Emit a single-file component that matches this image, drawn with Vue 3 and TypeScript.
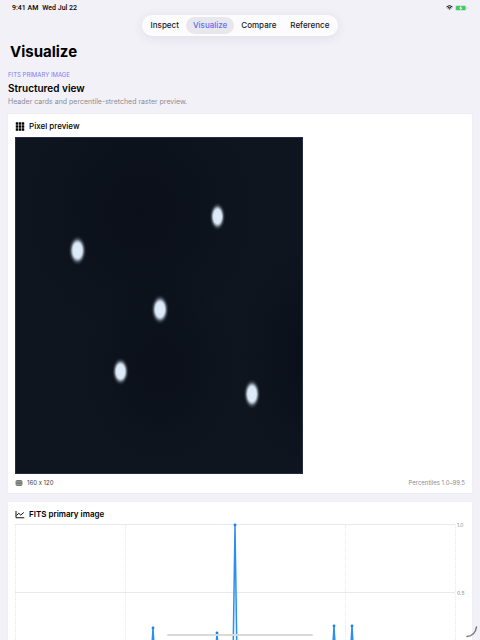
<script setup lang="ts">
import { ref } from 'vue'

interface Point { x: number; y: number }

const tabs: string[] = ['Inspect', 'Visualize', 'Compare', 'Reference']
const active = ref('Visualize')

const stars = [
  { x: 202.5, y: 79.5, rx: 6, ry: 10 },
  { x: 62.5, y: 113.5, rx: 7, ry: 11 },
  { x: 145, y: 172.5, rx: 7, ry: 11 },
  { x: 105.5, y: 234.5, rx: 6.5, ry: 10 },
  { x: 237, y: 257, rx: 6.5, ry: 11 },
]

// Chart space: y = 5 is value 1.0 and y = 141 is value 0.
const baseline = 141
const peaks: Point[] = [
  { x: 138, y: 108 },
  { x: 202, y: 113 },
  { x: 220, y: 5 },
  { x: 319, y: 106 },
  { x: 337, y: 106 },
]
const line = `M0 ${baseline}` + peaks
  .map(p => `L${p.x - 2} ${baseline}L${p.x} ${p.y}L${p.x + 2} ${baseline}`)
  .join('') + `L440 ${baseline}`
const columns: number[] = [0, 110, 330, 440]
</script>

<template>
  <div class="screen">
    <header class="status">
      <span class="clock"><span>9:41 AM</span><span>Wed Jul 22</span></span>
      <span class="indicators">
        <svg class="wifi" viewBox="0 0 14 10" aria-hidden="true">
          <path d="M1 3.8Q7-1.6 13 3.8M3.2 6.1Q7 2.8 10.8 6.1" />
          <path class="dot" d="M4.7 7.3Q7 5.6 9.3 7.3L7 9.7Z" />
        </svg>
        <svg class="battery" viewBox="0 0 26 12" aria-hidden="true">
          <rect class="case" x=".5" y=".5" width="22" height="11" rx="3" />
          <rect class="charge" x="2" y="2" width="19" height="8" rx="2" />
          <path class="charge" d="M24 4Q26 6 24 8Z" />
          <path class="bolt" d="M13 1L8 6.6H11L10 11L15 5.4H12Z" />
        </svg>
      </span>
    </header>

    <nav class="tabs" aria-label="Sections">
      <button
        v-for="tab in tabs"
        :key="tab"
        type="button"
        class="tab"
        :class="{ selected: tab === active }"
        @click="active = tab"
      >{{ tab }}</button>
    </nav>

    <main class="content">
      <h1>Visualize</h1>
      <p class="eyebrow">FITS PRIMARY IMAGE</p>
      <h2>Structured view</h2>
      <p class="summary">Header cards and percentile-stretched raster preview.</p>

      <section class="card">
        <h3>
          <svg class="icon" viewBox="0 0 18 18" aria-hidden="true">
            <template v-for="r in 3" :key="r">
              <rect v-for="c in 3" :key="c" :x="c * 6 - 5.5" :y="r * 6 - 5.5" width="5" height="5" rx="1" />
            </template>
          </svg>
          Pixel preview
        </h3>
        <svg class="raster" viewBox="0 0 288 337" role="img" aria-label="Star field">
          <defs>
            <radialGradient id="star">
              <stop offset="0" stop-color="#e0edfb" />
              <stop offset=".5" stop-color="#dae8f6" />
              <stop offset=".64" stop-color="#a9b6c3" stop-opacity=".85" />
              <stop offset=".8" stop-color="#6c7783" stop-opacity=".4" />
              <stop offset="1" stop-color="#35404b" stop-opacity="0" />
            </radialGradient>
            <radialGradient id="dark">
              <stop offset="0" stop-color="#0a0f19" />
              <stop offset="1" stop-color="#0a0f19" stop-opacity="0" />
            </radialGradient>
          </defs>
          <rect width="288" height="337" fill="#0f151e" />
          <ellipse cx="125" cy="75" rx="120" ry="130" fill="url(#dark)" />
          <ellipse cx="145" cy="230" rx="80" ry="100" fill="url(#dark)" />
          <ellipse cx="288" cy="220" rx="65" ry="110" fill="url(#dark)" />
          <ellipse
            v-for="s in stars"
            :key="s.x"
            :cx="s.x"
            :cy="s.y"
            :rx="s.rx + 2"
            :ry="s.ry + 4"
            fill="url(#star)"
          />
          <rect x=".5" y=".5" width="287" height="336" fill="none" stroke="#262d49" />
        </svg>
        <div class="meta">
          <span class="size">
            <svg class="table-icon" viewBox="0 0 14 12" aria-hidden="true">
              <rect x="1" y="1" width="12" height="10" rx="2" />
              <path d="M1 4.3H13M1 7.6H13M5 1V11M9 1V11" />
            </svg>
            160 x 120
          </span>
          <span class="range">Percentiles 1.0–99.5</span>
        </div>
      </section>

      <section class="card">
        <h3>
          <svg class="icon line-icon" viewBox="0 0 18 18" aria-hidden="true">
            <path d="M1 2V15.5H17.5M2 11L6.5 6.5L10.5 10L16.5 5" />
          </svg>
          FITS primary image
        </h3>
        <svg class="chart" viewBox="0 0 450 150" role="img" aria-label="FITS primary image profile">
          <path class="grid" d="M0 4.5H440M0 72.5H440M0 141H440" />
          <path v-for="x in columns" :key="x" class="grid dotted" :d="`M${x + 0.5} 5V141`" />
          <path class="series" :d="line" />
          <circle v-for="p in peaks" :key="p.x" class="mark" :cx="p.x" :cy="p.y" r="1.4" />
          <text x="442" y="7">1.0</text>
          <text x="442" y="75">0.5</text>
        </svg>
      </section>
    </main>

    <div class="home-bar"></div>
    <svg class="corner" viewBox="0 0 12 12" aria-hidden="true">
      <path d="M1 10.5Q9 10 10.5 1" />
    </svg>
  </div>
</template>

<style>
body {
  margin: 0;
  background: #f2f1f8;
}
</style>

<style scoped>
.screen {
  position: relative;
  height: 100vh;
  overflow: hidden;
  background: #f2f1f8;
  color: #000;
  font-family: Inter, "Liberation Sans", sans-serif;
  font-feature-settings: "calt" 0;
}

.status {
  display: flex;
  justify-content: space-between;
  align-items: center;
  height: 15px;
  padding: 0 12px;
  font-family: Roboto, "Liberation Sans", sans-serif;
  font-size: 7px;
  font-weight: 500;
}

.clock {
  display: flex;
  gap: 4px;
}

.indicators {
  display: flex;
  align-items: center;
  gap: 2px;
}

.wifi {
  width: 7px;
  height: 5px;
  fill: none;
  stroke: #111;
  stroke-width: 2;
}

.wifi .dot {
  fill: #111;
  stroke: none;
}

.battery {
  width: 13px;
  height: 6px;
}

.case {
  fill: #b5e4c2;
}

.charge {
  fill: #42c964;
}

.bolt {
  fill: #fff;
}

.tabs {
  display: flex;
  width: max-content;
  margin: 0 auto;
  padding: 2px;
  border-radius: 11px;
  background: #fcfcfe;
  box-shadow: 0 2px 12px rgba(40, 40, 70, 0.09);
}

.tab {
  height: 17px;
  padding: 0 7px;
  border: 0;
  border-radius: 9px;
  background: none;
  color: #19191b;
  font: 500 8px/17px Inter, "Liberation Sans", sans-serif;
}

.tab.selected {
  background: #e8e7ed;
  color: #666df0;
}

.content {
  padding: 0 8px;
}

h1 {
  margin: 6px 2px 0;
  font-size: 15px;
  line-height: 20px;
  font-weight: 700;
}

.eyebrow {
  margin: 8px 0 0;
  color: #7b80f1;
  font-size: 6px;
  line-height: 10px;
  font-weight: 400;
}

h2 {
  margin: 0;
  font-size: 10px;
  line-height: 16px;
  font-weight: 600;
}

.summary {
  margin: 0;
  color: #8c8c92;
  font-size: 7px;
  line-height: 12px;
}

.card {
  margin-top: 6px;
  padding: 7px;
  background: #fff;
  box-shadow: 0 0 1px #dedee6;
}

.card + .card {
  margin-top: 9px;
}

h3 {
  display: flex;
  align-items: center;
  gap: 4px;
  margin: 0 0 6px;
  font-size: 8px;
  line-height: 10px;
  font-weight: 500;
}

.icon {
  width: 10px;
  height: 9px;
}

.line-icon {
  fill: none;
  stroke: #111;
  stroke-width: 2;
}

.raster {
  display: block;
  width: 64%;
}

.meta {
  display: flex;
  justify-content: space-between;
  align-items: center;
  height: 7px;
  padding-top: 5px;
  font-size: 6px;
}

.size {
  display: flex;
  align-items: center;
  gap: 4px;
  color: #3b3b3e;
}

.table-icon {
  width: 8px;
  height: 6px;
  fill: #ddd;
  stroke: #444;
  stroke-width: 1.3;
}

.range {
  color: #8c8c92;
}

.card + .card h3 {
  margin-bottom: 1px;
  font-weight: 600;
}

.chart {
  display: block;
  width: 100%;
}

.grid {
  fill: none;
  stroke: #e9e9eb;
}

.dotted {
  stroke-dasharray: 1 1;
}

.series {
  fill: none;
  stroke: #2a8ff0;
  stroke-width: 1.5;
  stroke-linejoin: round;
}

.mark {
  fill: #1584ee;
}

.chart text {
  fill: #8c8c92;
  font-size: 5px;
}

.home-bar {
  position: absolute;
  bottom: 4px;
  left: 50%;
  width: 146px;
  height: 2px;
  border-radius: 1px;
  background: #d9d9da;
  transform: translateX(-50%);
}

.corner {
  position: absolute;
  right: 2px;
  bottom: 2px;
  width: 12px;
  height: 12px;
  fill: none;
  stroke: #77777b;
  stroke-width: 1.5;
  stroke-linecap: round;
}
</style>
